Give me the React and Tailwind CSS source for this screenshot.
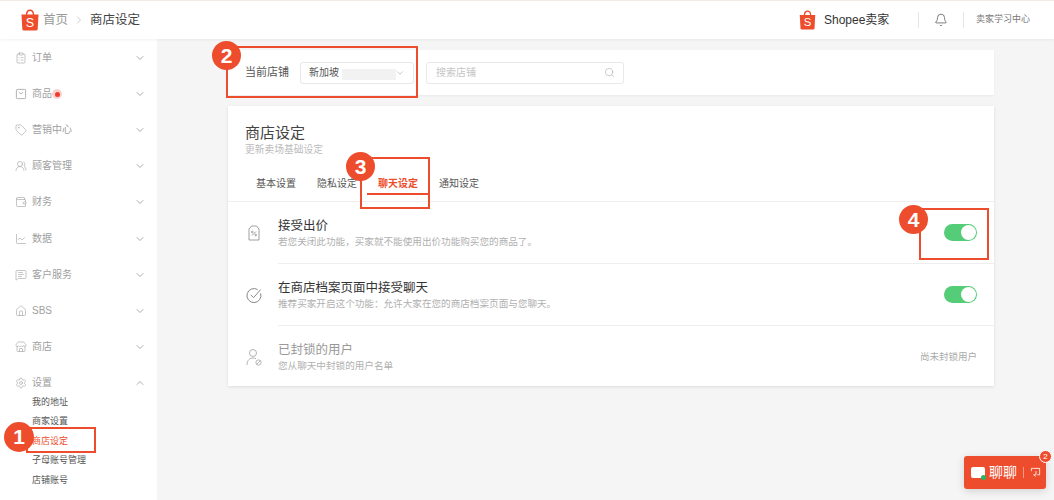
import React from "react";
import {
  Bell, ChevronDown, ChevronRight, ChevronUp, ClipboardList, Tag, UsersRound, Wallet,
  ChartLine, MessageSquareText, House, Store, Settings, Search,
} from "lucide-react";

const CJK = "font-['Liberation_Sans','Noto_Sans_CJK_SC',sans-serif]";

function ShopeeBag({ className }) {
  return (
    <svg viewBox="0 0 18 22" className={className}>
      <path d="M5.5 6.5 C5.5 -0.5 12.5 -0.5 12.5 6.5" fill="none" stroke="#ee4d2d" strokeWidth="1.4" />
      <path d="M0.5 5.5 H17.5 L16.7 20 Q16.6 21.5 15 21.5 H3 Q1.4 21.5 1.3 20 Z" fill="#ee4d2d" />
      <text x="9" y="18" textAnchor="middle" fontSize="12.5" fill="#fff" fontFamily="Liberation Sans, sans-serif">S</text>
    </svg>
  );
}

function BoxIcon({ className }) {
  return (
    <svg viewBox="0 0 12 12" fill="none" stroke="currentColor" strokeWidth="0.8" className={className}>
      <rect x="1.4" y="1.4" width="9.2" height="9.2" rx="0.8" />
      <path d="M3.8 4.2 L6 6 L8.2 4.2" />
    </svg>
  );
}

const menus = [
  { label: "订单", icon: ClipboardList },
  { label: "商品", icon: BoxIcon, dot: true },
  { label: "营销中心", icon: Tag },
  { label: "顾客管理", icon: UsersRound },
  { label: "财务", icon: Wallet },
  { label: "数据", icon: ChartLine },
  { label: "客户服务", icon: MessageSquareText },
  { label: "SBS", icon: House },
  { label: "商店", icon: Store },
];

const subMenus = ["我的地址", "商家设置", "商店设定", "子母账号管理", "店铺账号"];
const tabs = ["基本设置", "隐私设定", "聊天设定", "通知设定"];

function MenuRow({ item, open }) {
  const Icon = item.icon;
  const Arrow = open ? ChevronUp : ChevronDown;
  return (
    <div className="flex h-[36.1px] items-center pl-[15px] pr-[11px] text-[#a0a0a0]">
      <Icon className="h-[12px] w-[12px] shrink-0" strokeWidth={1.2} />
      <span className="ml-[5px] text-[10px] leading-none">{item.label}</span>
      {item.dot && (
        <span className="flex h-[10px] w-[10px] items-center justify-center rounded-full bg-[#fbd3cc]">
          <span className="h-[5px] w-[5px] rounded-full bg-[#ee3b2d]" />
        </span>
      )}
      <Arrow className="ml-auto h-[12px] w-[12px] text-[#888]" strokeWidth={1.4} />
    </div>
  );
}

function Toggle() {
  return (
    <div className="flex h-[17px] w-[33px] items-center justify-end rounded-full bg-[#55cc77] pr-[1px]">
      <span className="h-[15px] w-[15px] rounded-full bg-white" />
    </div>
  );
}

function SettingRow({ icon, title, desc, right, muted, border }) {
  return (
    <div className="flex h-[62px] items-center">
      <div className="flex w-[50px] shrink-0 justify-center pl-[2px] text-[#999]">{icon}</div>
      <div className={`flex h-full flex-1 items-center justify-between pr-[17px] ${border ? "border-b border-[#eeeeee]" : ""}`}>
        <div>
          <div className={`text-[12.5px] leading-[17px] ${muted ? "text-[#999]" : "text-[#333]"}`}>{title}</div>
          <div className="text-[9.6px] leading-[13px] text-[#b0b0b0]">{desc}</div>
        </div>
        {right}
      </div>
    </div>
  );
}

function Badge({ n, className }) {
  return (
    <div className={`absolute flex h-[29px] w-[29px] items-center justify-center rounded-full bg-[#ee4d2d] text-[21px] font-bold text-white ${className}`}>
      {n}
    </div>
  );
}

export default function App() {
  return (
    <div className={`relative h-[500px] w-[1054px] overflow-hidden bg-[#f5f5f5] ${CJK}`}>
      {/* Header */}
      <header className="relative z-10 flex h-[39px] items-center border-t border-[#f5e9e6] bg-white pl-[21px] shadow-[0_1px_3px_rgba(0,0,0,0.06)]">
        <ShopeeBag className="h-[22px] w-[18px]" />
        <span className="ml-1 text-[12.5px] text-[#999]">首页</span>
        <ChevronRight className="mx-[5px] h-[12px] w-[12px] text-[#aaa]" strokeWidth={1.2} />
        <span className="text-[12.5px] text-[#444]">商店设定</span>
        <div className="ml-auto flex items-center pr-[24px]">
          <ShopeeBag className="h-[20px] w-[17px]" />
          <span className="ml-[8px] w-[66px] text-[12px] text-[#333]">Shopee卖家</span>
          <div className="ml-[28px] h-[16px] w-px bg-[#e5e5e5]" />
          <Bell className="mx-[15px] h-[14px] w-[14px] text-[#555]" strokeWidth={1.3} />
          <div className="mr-[12px] h-[16px] w-px bg-[#e5e5e5]" />
          <span className="text-[9px] text-[#777]">卖家学习中心</span>
        </div>
      </header>

      <div className="flex h-[461px]">
        {/* Sidebar */}
        <aside className="w-[157px] shrink-0 bg-white pt-px">
          {menus.map((m) => (
            <MenuRow key={m.label} item={m} />
          ))}
          <MenuRow item={{ label: "设置", icon: Settings }} open />
          <div className="-mt-2 pl-8">
            {subMenus.map((s) => (
              <div key={s} className={`flex h-[19.5px] items-center text-[9px] ${s === "商店设定" ? "text-[#ee4d2d]" : "text-[#555]"}`}>
                {s}
              </div>
            ))}
          </div>
        </aside>

        {/* Main */}
        <main className="w-[766px] ml-[71px] pt-[11px]">
          <div className="flex h-[45px] items-center bg-white pl-[17px] shadow-[0_1px_2px_rgba(0,0,0,0.05)]">
            <span className="text-[11px] text-[#555]">当前店铺</span>
            <div className="relative ml-[11px] flex h-[22px] w-[114px] items-center justify-between rounded-[3px] border border-[#e8e8e8] pl-[8px] pr-[8px]">
              <span className="text-[10px] text-[#555]">新加坡</span>
              <span className="h-[11px] w-[54px] translate-x-[2px] translate-y-[2px] bg-[#f2f2f2]" />
              <ChevronDown className="h-[10px] w-[10px] text-[#999]" strokeWidth={1.3} />
            </div>
            <div className="ml-[12px] flex h-[22px] w-[198px] items-center justify-between rounded-[3px] border border-[#e8e8e8] pl-[9px] pr-[8px]">
              <span className="text-[10px] text-[#c4c4c4]">搜索店铺</span>
              <Search className="h-[11px] w-[11px] text-[#aaa]" strokeWidth={1.3} />
            </div>
          </div>

          <div className="mt-[11px] h-[280px] bg-white shadow-[0_1px_3px_rgba(0,0,0,0.1)]">
            <div className="h-[96px] border-b border-[#eeeeee] pl-[17px] pt-[17px]">
              <div className="text-[15px] leading-[20px] text-[#444]">商店设定</div>
              <div className="text-[9.75px] leading-[13px] text-[#bbb]">更新卖场基础设定</div>
              <div className="mt-[14px] flex gap-[21px] pl-[11px]">
                {tabs.map((t) => (
                  <div key={t} className="relative">
                    <span className={`text-[10px] ${t === "聊天设定" ? "font-bold text-[#ee4d2d]" : "text-[#555]"}`}>{t}</span>
                    {t === "聊天设定" && <div className="absolute -left-[11px] top-[23px] h-[2px] w-[61px] bg-[#ee4d2d]" />}
                  </div>
                ))}
              </div>
            </div>
            <SettingRow
              border
              title="接受出价"
              desc={"若您关闭此功能\uFF0C买家就不能使用出价功能购买您的商品了。"}
              right={<Toggle />}
              icon={
                <svg viewBox="0 0 12 16" fill="none" stroke="#888" strokeWidth="0.8" className="h-[16px] w-[12px]">
                  <path d="M3.5 1 H8.5 L11 4 V15 H1 V4 Z" />
                  <path d="M4 10.5 L8 6.5" />
                  <circle cx="4.3" cy="7" r="0.8" />
                  <circle cx="7.7" cy="10" r="0.8" />
                </svg>
              }
            />
            <SettingRow
              border
              title="在商店档案页面中接受聊天"
              desc={"推荐买家开启这个功能\uFF1A允许大家在您的商店档案页面与您聊天。"}
              right={<Toggle />}
              icon={
                <svg viewBox="0 0 16 16" fill="none" stroke="#888" strokeWidth="1" className="h-[16px] w-[16px]">
                  <path d="M14.6 6.4 A7 7 0 1 1 11.6 2.6" />
                  <path d="M4.8 8 L7.6 10.6 L14.6 2.6" />
                </svg>
              }
            />
            <SettingRow
              muted
              title="已封锁的用户"
              desc="您从聊天中封锁的用户名单"
              right={<span className="text-[9.5px] text-[#aaa]">尚未封锁用户</span>}
              icon={
                <svg viewBox="0 0 16 18" fill="none" stroke="#aaa" strokeWidth="0.9" className="h-[18px] w-[16px]">
                  <circle cx="7" cy="5" r="3.5" />
                  <path d="M1 17 C1 12 4 10 7 10 C8 10 9 10.2 10 10.8" />
                  <circle cx="12.5" cy="14.5" r="2.6" />
                  <path d="M10.8 16.2 L14.2 12.8" />
                </svg>
              }
            />
          </div>
        </main>
      </div>

      {/* Chat button */}
      <div className="absolute left-[964px] top-[456px] flex h-[33px] w-[82px] items-center rounded-[3px] bg-[#ee4d2d] pl-[7px] text-white shadow-[0_2px_8px_rgba(0,0,0,0.15)]">
        <span className="relative h-[11px] w-[14px] rounded-[2px] bg-white">
          <span className="absolute -bottom-[2px] -right-[1px] h-[5px] w-[5px] rounded-full bg-[#26b562]" />
        </span>
        <span className="ml-[4px] text-[14px]">聊聊</span>
        <span className="mx-[6px] h-[11px] w-px bg-[#f59a86]" />
        <svg viewBox="0 0 12 12" fill="none" stroke="#fff" strokeWidth="0.9" className="h-[11px] w-[11px]">
          <path d="M4 1.5 H10.5 V8.5 H8 M1.5 4.5 V1.5 H4 M6 10.5 L4 8.5 H6.5 V4.5" />
        </svg>
        <span className="absolute -right-[6px] -top-[6px] flex h-[13px] w-[13px] items-center justify-center rounded-full border border-white bg-[#ee4d2d] text-[8px] leading-none">2</span>
      </div>

      {/* Annotations */}
      <div className="absolute left-[26px] top-[427px] h-[26px] w-[70px] border-2 border-[#ee4d2d]" />
      <Badge n="1" className="left-[4px] top-[422px] h-[30px] w-[30px]" />
      <div className="absolute left-[226px] top-[46px] h-[52px] w-[192px] border-2 border-[#ee4d2d]" />
      <Badge n="2" className="left-[212px] top-[41px]" />
      <div className="absolute left-[360px] top-[157px] h-[52px] w-[70px] border-2 border-[#ee4d2d]" />
      <Badge n="3" className="left-[346px] top-[152px]" />
      <div className="absolute left-[919px] top-[208px] h-[52px] w-[70px] border-2 border-[#ee4d2d]" />
      <Badge n="4" className="left-[899px] top-[205px]" />
    </div>
  );
}
